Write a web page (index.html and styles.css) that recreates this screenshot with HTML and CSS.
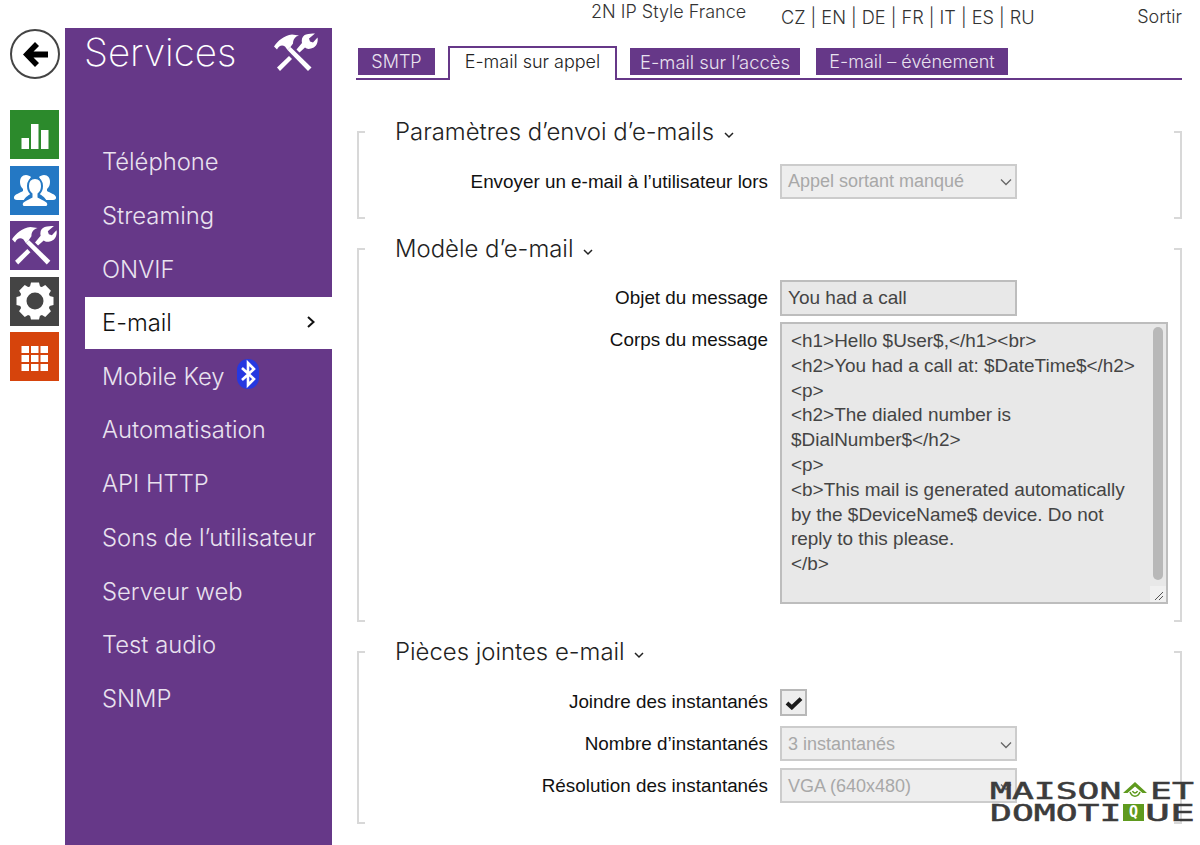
FILE: index.html
```html
<!DOCTYPE html>
<html lang="fr">
<head>
<meta charset="utf-8">
<title>Services - E-mail</title>
<link rel="stylesheet" href="styles.css">
</head>
<body>
<svg class="defs" width="0" height="0" aria-hidden="true">
  <symbol id="tools" viewBox="0 0 44 38">
    <path d="M0 13 C4 7 10 2 18 1 L25 2 C21 3 19 6 19 10 L16.500 13.500 L13.500 16.500 L11 13 C8 11 5 12 3 16 Z"/>
    <path d="M13.500 16.500 L16.500 13.500 L37.500 34 L34 37.500 Z"/>
    <path d="M3 34 L15 22.500 L18 25.500 L6 37.500 Z"/>
    <path d="M41 0 L35 5 L36 8 L39 9 L43.500 4 C44.500 9 42 14 37 15 C34 16 32.500 15 31 14 L25.500 19 L22.500 16 L28 9.500 C27 5 29 2 32 1 C35 0 38 0 41 0 Z"/>
  </symbol>
</svg>

<div class="page">
  <nav class="rail">
    <a class="back" aria-label="Retour">
      <svg viewBox="0 0 25 25" width="25" height="25"><path d="M12 0 L0 12.500 L12 25 L16 21 L10.500 15.500 L25 15.500 L25 9.500 L10.500 9.500 L16 4 Z"/></svg>
    </a>
    <div class="tiles">
      <a class="tile tile-green">
        <svg viewBox="0 0 48 48" width="48" height="48"><path d="M10.500 27h7.500v11h-7.500zM20 13h7.500v25h-7.500zM30 19h7.500v19h-7.500z"/></svg>
      </a>
      <a class="tile tile-blue">
        <svg viewBox="0 0 48 48" width="48" height="48">
          <path d="M15 9c-4 0-6 3-6 7 0 3 1 5 3 7v2c-3 2-8 3-9 6-.5 2 1 3 3 3h7c1-3 5-5 8-7v-2c-2-2-3-5-3-8 0-2 .5-4 2-6-1-1-3-2-5-2z"/>
          <path d="M33 9c4 0 6 3 6 7 0 3-1 5-3 7v2c3 2 8 3 9 6 .5 2-1 3-3 3h-7c-1-3-5-5-8-7v-2c2-2 3-5 3-8 0-2-.5-4-2-6 1-1 3-2 5-2z"/>
          <path d="M24 12c-5 0-7 4-7 8 0 3 1 6 3.500 8v3c-3 2-8 3-9.500 6-1 3 1 4 3 4h20c2 0 4-1 3-4-1.500-3-6.500-4-9.500-6v-3c2.500-2 3.500-5 3.500-8 0-4-2-8-7-8z" class="cut"/>
        </svg>
      </a>
      <a class="tile tile-purple">
        <svg class="tile-tools" width="45" height="39"><use href="#tools"/></svg>
      </a>
      <a class="tile tile-dark">
        <svg viewBox="0 0 48 48" width="48" height="48">
          <g class="gear">
            <circle cx="24" cy="24" r="12" fill="none" stroke-width="7"/>
            <path d="M20 5.500h8l2 8h-12zM20 42.500h8l2-8h-12zM5.500 20v8l8 2v-12zM42.500 20v8l-8 2v-12z"/>
            <path d="M20 5.500h8l2 8h-12zM20 42.500h8l2-8h-12zM5.500 20v8l8 2v-12zM42.500 20v8l-8 2v-12z" transform="rotate(45 24 24)"/>
          </g>
        </svg>
      </a>
      <a class="tile tile-orange">
        <svg viewBox="0 0 48 48" width="48" height="48"><path d="M10.500 13h7.500v7h-7.500zM20 13h7.500v7h-7.500zM29.500 13h7.500v7h-7.500zM10.500 22h7.500v7h-7.500zM20 22h7.500v7h-7.500zM29.500 22h7.500v7h-7.500zM10.500 31h7.500v7h-7.500zM20 31h7.500v7h-7.500zM29.500 31h7.500v7h-7.500z"/></svg>
      </a>
    </div>
  </nav>

  <aside class="panel">
    <header class="panel-head">
      <h1>Services</h1>
      <svg width="44" height="39"><use href="#tools"/></svg>
    </header>
    <ul class="menu">
      <li>Téléphone</li>
      <li>Streaming</li>
      <li>ONVIF</li>
      <li class="current">E-mail
        <svg viewBox="0 0 10 14" width="10" height="14"><path d="M2 2 L7.500 7 L2 12" fill="none" stroke="#111" stroke-width="2"/></svg>
      </li>
      <li class="mobile">Mobile Key
        <svg viewBox="0 0 22 30" width="22" height="30">
          <rect x="0" y="0" width="22" height="30" rx="11" fill="#2638e0"/>
          <path d="M5 9 L17 20 L11 26 L11 4 L17 10 L5 21" fill="none" stroke="#fff" stroke-width="2.600"/>
        </svg>
      </li>
      <li>Automatisation</li>
      <li>API HTTP</li>
      <li>Sons de l’utilisateur</li>
      <li>Serveur web</li>
      <li>Test audio</li>
      <li>SNMP</li>
    </ul>
  </aside>

  <main class="main">
    <div class="topbar">
      <span class="device">2N IP Style France</span>
      <span class="langs">CZ | EN | DE | FR | IT | ES | RU</span>
      <span class="logout">Sortir</span>
    </div>
    <div class="tabs">
      <a class="tab tab-smtp">SMTP</a>
      <a class="tab tab-active">E-mail sur appel</a>
      <a class="tab tab-access">E-mail sur l’accès</a>
      <a class="tab tab-event">E-mail – événement</a>
    </div>

    <section class="group group-send">
      <h2>Paramètres d’envoi d’e-mails <svg class="caret" viewBox="0 0 10 8" width="10" height="8"><path d="M1 2 L5 6 L9 2" fill="none" stroke="#222" stroke-width="1.500"/></svg></h2>
      <div class="row">
        <label>Envoyer un e-mail à l’utilisateur lors</label>
        <div class="select">Appel sortant manqué<svg viewBox="0 0 12 8" width="12" height="8"><path d="M1 1.500 L6 6.500 L11 1.500" fill="none" stroke="#666" stroke-width="1.300"/></svg></div>
      </div>
    </section>

    <section class="group group-template">
      <h2>Modèle d’e-mail <svg class="caret" viewBox="0 0 10 8" width="10" height="8"><path d="M1 2 L5 6 L9 2" fill="none" stroke="#222" stroke-width="1.500"/></svg></h2>
      <div class="row row-subject">
        <label>Objet du message</label>
        <div class="input">You had a call</div>
      </div>
      <div class="row row-body">
        <label>Corps du message</label>
        <div class="textarea">
          <div class="textarea-text">&lt;h1&gt;Hello $User$,&lt;/h1&gt;&lt;br&gt;
&lt;h2&gt;You had a call at: $DateTime$&lt;/h2&gt;
&lt;p&gt;
&lt;h2&gt;The dialed number is
$DialNumber$&lt;/h2&gt;
&lt;p&gt;
&lt;b&gt;This mail is generated automatically
by the $DeviceName$ device. Do not
reply to this please.
&lt;/b&gt;</div>
          <div class="scroll"><div class="thumb"></div></div>
          <div class="resizer"><svg viewBox="0 0 10 10" width="10" height="10"><path d="M1 9 L9 1 M5 9 L9 5" stroke="#555" stroke-width="1" fill="none"/></svg></div>
        </div>
      </div>
    </section>

    <section class="group group-attach">
      <h2>Pièces jointes e-mail <svg class="caret" viewBox="0 0 10 8" width="10" height="8"><path d="M1 2 L5 6 L9 2" fill="none" stroke="#222" stroke-width="1.500"/></svg></h2>
      <div class="row row-check">
        <label>Joindre des instantanés</label>
        <div class="check"><svg viewBox="0 0 20 16" width="18" height="14"><path d="M2 8 L7.500 13 L18 3" fill="none" stroke="#1c1c1c" stroke-width="4.600"/></svg></div>
      </div>
      <div class="row row-count">
        <label>Nombre d’instantanés</label>
        <div class="select">3 instantanés<svg viewBox="0 0 12 8" width="12" height="8"><path d="M1 1.500 L6 6.500 L11 1.500" fill="none" stroke="#666" stroke-width="1.300"/></svg></div>
      </div>
      <div class="row row-res">
        <label>Résolution des instantanés</label>
        <div class="select">VGA (640x480)<svg viewBox="0 0 12 8" width="12" height="8"><path d="M1 1.500 L6 6.500 L11 1.500" fill="none" stroke="#666" stroke-width="1.300"/></svg></div>
      </div>
    </section>
  </main>
</div>

<div class="watermark">
  <div class="wm-line">
    <span class="wm-word wm-six">MAISON</span>
    <svg class="wm-house" viewBox="0 0 24 17" width="24" height="17"><path d="M12 0 L24 11 L19.500 11 L12 4.500 L4.500 11 L0 11 Z" fill="#5f9a1e"/><path d="M7 10 C9 15.500 15 15.500 17 10 M9.500 9 C10.500 11.500 13.500 11.500 14.500 9" fill="none" stroke="#5f9a1e" stroke-width="1.500"/></svg>
    <span class="wm-word wm-two">ET</span>
  </div>
  <div class="wm-line">
    <span class="wm-word wm-six">DOMOTI</span>
    <span class="wm-q">Q</span>
    <span class="wm-word wm-ue">UE</span>
  </div>
</div>
</body>
</html>
```
FILE: styles.css
```css
* { box-sizing: border-box; }
html, body { margin: 0; height: 845px; overflow: hidden; background: #fff; }
body { font-family: "Liberation Sans", Arial, sans-serif; color: #111; position: relative; }
.defs { position: absolute; }
.page { display: flex; height: 845px; }

/* left rail */
.rail { width: 65px; padding: 29px 0 0 10px; flex: none; }
.back { display: flex; align-items: center; justify-content: center; width: 50px; height: 50px; border: 2px solid #444; border-radius: 50%; background: #fff; margin-bottom: 31px; }
.back svg { fill: #000; }
.tiles { display: flex; flex-direction: column; gap: 6.500px; }
.tile { display: flex; align-items: center; justify-content: center; width: 49px; height: 49px; }
.tile svg { fill: #fff; }
.tile-green { background: #2c8a2c; }
.tile-blue { background: #2478c4; }
.tile-purple { background: #663a8a; }
.tile-dark { background: #444; }
.tile-orange { background: #d6440c; }
.tile-blue .cut { stroke: #2478c4; stroke-width: 2; }
.gear circle { stroke: #fff; }

/* purple panel */
.panel { width: 267px; flex: none; margin-top: 28px; background: #663888; color: #e9e2ef; }
.panel-head { display: flex; align-items: center; justify-content: space-between; padding: 0 14px 0 19px; height: 48px; }
.panel-head svg { fill: #fff; }
.panel-head h1 { margin: 0; font-family: Inter, sans-serif; font-weight: 200; font-size: 38.500px; color: #fff; line-height: 48px; }
.menu { list-style: none; margin: 59px 0 0 20px; padding: 0; }
.menu li { display: flex; align-items: center; height: 53.700px; padding-left: 17px; font-family: Inter, sans-serif; font-weight: 300; font-size: 23.800px; }
.menu li.current { height: 52px; margin: 1px 0 .4px; padding-bottom: 2px; background: #fff; color: #111; justify-content: space-between; padding-right: 16px; }
.menu li.mobile { gap: 13px; }
.menu li.mobile svg { margin-top: -4px; }

/* main */
.main { flex: 1; padding: 0 18px 0 24px; min-width: 0; }
.topbar { position: relative; height: 46px; font-family: Inter, sans-serif; font-weight: 300; font-size: 18px; color: #333; }
.device { position: absolute; left: 235px; top: 1px; }
.langs { position: absolute; left: 425px; top: 6px; font-size: 18.150px; }
.logout { position: absolute; right: 0; top: 6px; }

.tabs { display: flex; align-items: flex-start; height: 34px; border-bottom: 2px solid #663888; padding-left: 2px; margin-bottom: 51px; }
.tab { display: flex; align-items: center; justify-content: center; height: 27px; margin-top: 2px; background: #663888; color: #e9e2ef; font-family: Inter, sans-serif; font-weight: 300; font-size: 18px; white-space: nowrap; }
.tab-smtp { width: 77px; }
.tab-active { background: #fff; color: #222; width: 169px; height: 34px; margin: 0 0 0 13px; padding-bottom: 5px; border: 2px solid #663888; border-bottom: 0; }
.tab-access { width: 170px; margin-left: 13px; font-size: 18.400px; }
.tab-event { width: 192px; margin-left: 16px; }

/* groups */
.group {
  position: relative;
  border-left: 2px solid #d8d8d8;
  border-right: 2px solid #d8d8d8;
  margin: 0 0 29px 1px;
  background:
    linear-gradient(#d8d8d8, #d8d8d8) left top / 6px 2px no-repeat,
    linear-gradient(#d8d8d8, #d8d8d8) right top / 6px 2px no-repeat,
    linear-gradient(#d8d8d8, #d8d8d8) left bottom / 6px 2px no-repeat,
    linear-gradient(#d8d8d8, #d8d8d8) right bottom / 6px 2px no-repeat;
}
.group-send { height: 88px; }
.group-template { height: 374px; }
.group-attach { height: 173px; }
.group h2 { margin: 0 0 0 36px; height: 0; font-family: Inter, sans-serif; font-weight: 300; font-size: 23.900px; line-height: 0; color: #222; white-space: nowrap; }
.caret { margin-left: 3px; vertical-align: 1px; }

.row { display: flex; gap: 12px; align-items: center; }
.row label { width: 409px; flex: none; text-align: right; font-size: 18.850px; color: #111; }
.group-send .row { padding-top: 33px; }
.row-subject { padding-top: 32px; }
.row-body { align-items: flex-start; margin-top: 6px; }
.row-body label { padding-top: 7px; }
.row-check { padding-top: 38px; }
.row-check label { padding-bottom: 2px; }
.row-count { margin-top: 10px; }
.row-res { margin-top: 7px; }

.select, .input, .check, .textarea { border: 2px solid #ccc; background: #eee; }
.select { display: flex; align-items: center; justify-content: space-between; width: 237px; height: 35px; padding: 0 3px 0 6px; color: #a8a8a8; font-size: 18px; }
.row-count .select, .row-res .select { padding-top: 2px; }
.input { width: 237px; height: 36px; padding: 0 6px; display: flex; align-items: center; border-color: #bdbdbd; background: #e8e8e8; color: #444; font-size: 19px; }
.textarea { position: relative; width: 388px; height: 282px; border-color: #bdbdbd; background: #e8e8e8; color: #444; font-size: 18.950px; }
.textarea-text { white-space: pre-wrap; line-height: 24.800px; padding: 5px 0 0 9px; }
.scroll { position: absolute; top: 0; right: 0; bottom: 0; width: 15px; }
.thumb { position: absolute; top: 3px; left: 2px; width: 10px; height: 253px; border-radius: 5px; background: #b8b8b8; }
.resizer { position: absolute; right: 0; bottom: 0; width: 16px; height: 16px; background: #f0f0f0; display: flex; align-items: flex-end; justify-content: flex-end; padding: 0 2px 1px 0; }
.check { display: flex; align-items: center; justify-content: center; width: 27px; height: 27px; border-color: #b8b8b8; background: #eee; }

/* watermark */
.watermark { position: absolute; left: 990px; top: 780px; width: 208px; font-family: "DejaVu Sans Mono", monospace; font-size: 23px; line-height: 20px; color: #3c3c3c; -webkit-text-stroke: .5px #3c3c3c; }
.wm-line { display: flex; align-items: center; height: 21px; margin-bottom: 1px; }
.wm-word { display: inline-block; transform: scaleX(1.580); transform-origin: left center; }
.wm-six { width: 133px; }
.wm-two { width: 45px; margin-left: 3px; }
.wm-ue { width: 51px; transform: scaleX(1.800); }
.wm-house { flex: none; }
.wm-q { display: flex; align-items: center; justify-content: center; width: 21px; height: 17px; background: #5f9a1e; color: #fff; -webkit-text-stroke: 0; font-size: 15px; font-weight: 700; line-height: 1; flex: none; margin-right: 1px; }
```
